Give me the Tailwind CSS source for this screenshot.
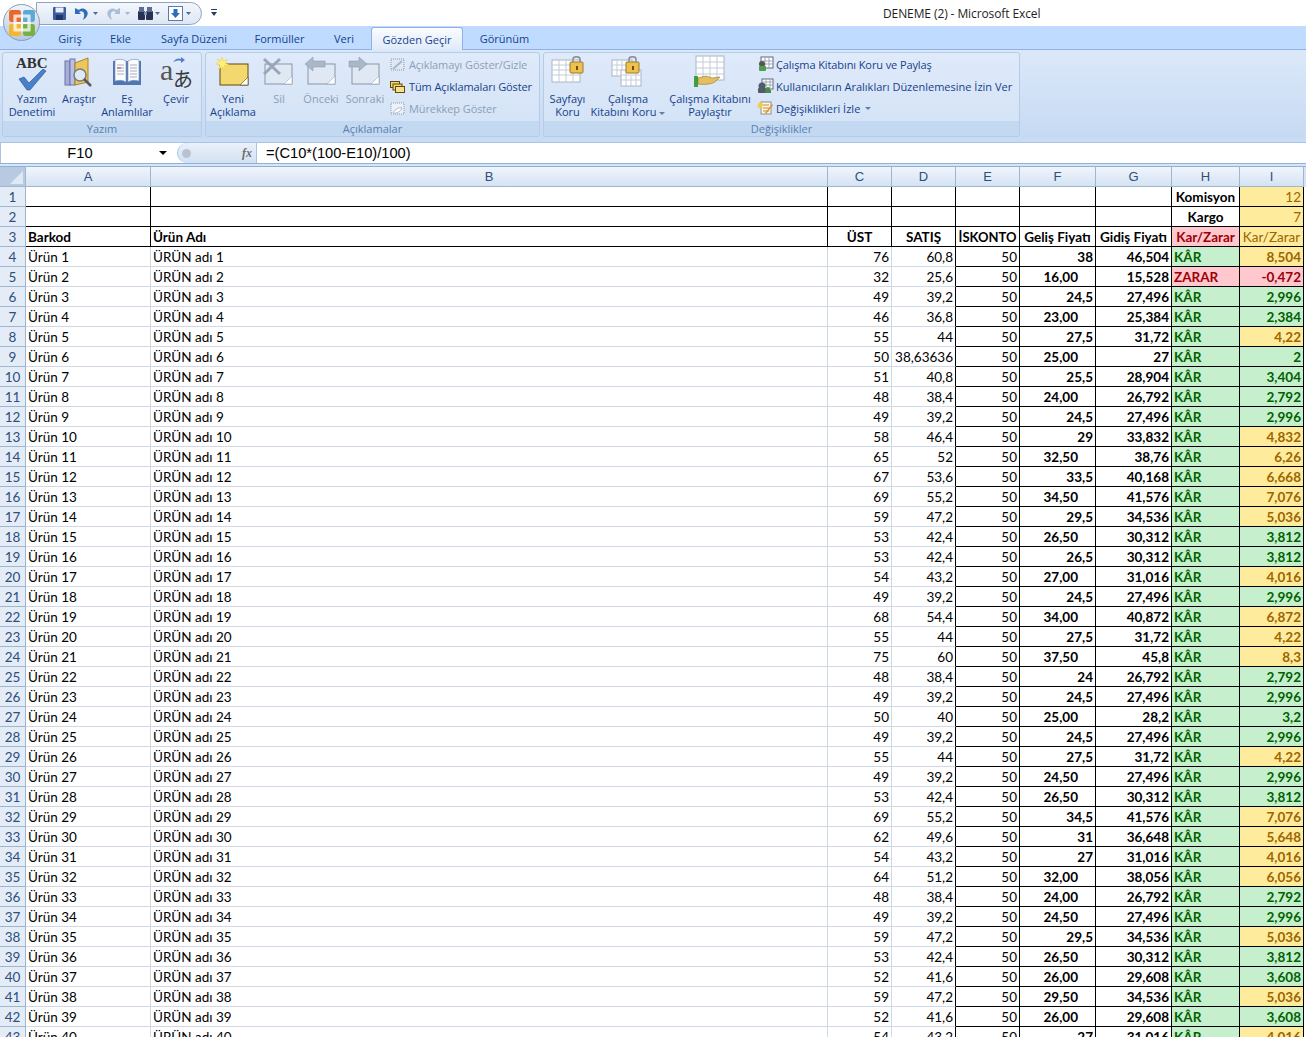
<!DOCTYPE html>
<html lang="en">
<head>
    <meta charset="UTF-8">
    <title>DENEME (2) - Microsoft Excel</title>
    <script src="https://cdn.jsdelivr.net/npm/@tailwindcss/browser@4"></script>
</head>
<body class="w-[1306px] h-[1037px] overflow-hidden bg-white font-['Open_Sans',sans-serif] text-[11px] text-[#15428b] relative">

    <!-- Office button -->
    <div class="absolute left-[3px] top-[4px] w-[37px] h-[37px] rounded-full border border-[#8a9bb5] bg-gradient-to-b from-[#f2f5fa] to-[#b9c7dc] flex items-center justify-center z-10">
        <svg width="28" height="28" viewBox="0 0 26 26">
            <rect x="1" y="1" width="11" height="11" rx="2" fill="#e8672a"/>
            <rect x="14" y="1" width="11" height="11" rx="2" fill="#5aa9d6"/>
            <rect x="1" y="14" width="11" height="11" rx="2" fill="#f3b62c"/>
            <rect x="14" y="14" width="11" height="11" rx="2" fill="#76b043"/>
            <rect x="5" y="5" width="16" height="16" rx="1" fill="#fff" fill-opacity="0.75"/>
            <rect x="8" y="8" width="4" height="4" fill="#e8672a"/>
            <rect x="14" y="8" width="4" height="4" fill="#5aa9d6"/>
            <rect x="8" y="14" width="4" height="4" fill="#f3b62c"/>
            <rect x="14" y="14" width="4" height="4" fill="#76b043"/>
        </svg>
    </div>

    <!-- Title bar -->
    <div class="h-[26px] bg-white flex items-center relative">
        <div class="ml-[36px] h-[23px] w-[166px] rounded-r-full border border-[#8ea3c0] bg-gradient-to-b from-[#f4f7fc] to-[#dce6f4] flex items-center pl-[15px]">
            <svg class="mr-[7px]" width="15" height="15" viewBox="0 0 15 15"><rect x="1" y="1" width="13" height="13" rx="1" fill="#3d5a9c"/><rect x="3.500" y="1.500" width="8" height="5" fill="#e9eef7"/><rect x="4" y="9" width="7" height="5" fill="#20356b"/></svg>
            <svg class="mr-[7px]" width="25" height="15" viewBox="0 0 25 15"><path d="M1 2v6h6L5 6c3-2 6 0 5 5l-1 3c5-3 6-8 3-10-2-2-5-2-7 0z" fill="#2f6dbb"/><path d="M19 6h5l-2.500 3z" fill="#4b6a9c"/></svg>
            <svg class="mr-[6px]" width="25" height="15" viewBox="0 0 25 15"><path d="M14 2v6H8l2-2c-3-2-6 0-5 5l1 3C1 11 0 6 3 4c2-2 5-2 7 0z" fill="#a9bdd6"/><path d="M19 6h5l-2.500 3z" fill="#a9b7cb"/></svg>
            <svg class="mr-[7px]" width="24" height="15" viewBox="0 0 24 15"><rect x="1" y="5" width="7" height="9" rx="1" fill="#26324f"/><rect x="9" y="5" width="7" height="9" rx="1" fill="#26324f"/><rect x="2" y="1" width="5" height="5" fill="#5b6d92"/><rect x="10" y="1" width="5" height="5" fill="#5b6d92"/><rect x="7" y="6" width="3" height="3" fill="#7f8db0"/><path d="M18 6h5l-2.500 3z" fill="#4b6a9c"/></svg>
            <svg width="24" height="15" viewBox="0 0 24 15"><rect x="0.500" y="0.500" width="14" height="14" fill="#fff" stroke="#5b7bae"/><path d="M5.500 3h4v4h2.500l-4.500 5-4.500-5h2.500z" fill="#2f6dbb"/><path d="M18 6h5l-2.500 3z" fill="#4b6a9c"/></svg>
        </div>
        <svg class="ml-[9px]" width="7" height="8" viewBox="0 0 7 8"><rect y="0" width="6" height="1" fill="#2c3e60"/><path d="M0 3h6l-3 4z" fill="#2c3e60"/></svg>
        <div class="absolute left-0 right-0 top-[6px] pl-[883px] text-[#1e1e1e] text-[12px] leading-[15px] tracking-[-0.1px] whitespace-nowrap">DENEME (2) - Microsoft Excel</div>
    </div>

    <!-- Tabs -->
    <div class="h-[24px] bg-[#bfdbff] border-b border-[#8db2e3] flex items-end pl-[45px]">
        <div class="w-[50px] h-[20px] flex items-center justify-center">Giriş</div>
        <div class="w-[51px] h-[20px] flex items-center justify-center">Ekle</div>
        <div class="w-[96px] h-[20px] flex items-center justify-center">Sayfa Düzeni</div>
        <div class="w-[75px] h-[20px] flex items-center justify-center">Formüller</div>
        <div class="w-[54px] h-[20px] flex items-center justify-center">Veri</div>
        <div class="w-[92px] h-[23px] pt-[2px] flex items-center justify-center bg-gradient-to-b from-[#fafcff] to-[#dfeafa] border border-[#8db2e3] border-b-0 rounded-t-[3px] -mb-px">Gözden Geçir</div>
        <div class="w-[83px] h-[20px] flex items-center justify-center">Görünüm</div>
    </div>

    <!-- Ribbon -->
    <div class="h-[88px] bg-gradient-to-b from-[#dbe8f9] to-[#c7daf3] flex pl-[2px] pt-[2px] gap-[3px]">

        <div class="w-[200px] h-[85px] rounded-[3px] border border-[#b5cce8] bg-gradient-to-b from-[#dfeafa] to-[#d2e2f6] flex flex-col overflow-hidden">
            <div class="flex-1 flex pl-[2px] text-center leading-[13px]">
                <div class="w-[54px] flex flex-col items-center pt-[2px]">
                    <div class="h-[37px] w-[36px] relative">
                        <span class="absolute left-[2px] top-0 font-['Liberation_Serif',serif] font-bold text-[15px] text-[#333] leading-[16px]">ABC</span>
                        <svg class="absolute left-[3px] top-[12px]" width="30" height="24" viewBox="0 0 30 24"><path d="M2 12l5-2 5 6L26 2l3 2L13 23h-3z" fill="#4a80c8" stroke="#2b5a9c" stroke-width="0.7"/></svg>
                    </div>
                    <div>Yazım<br>Denetimi</div>
                </div>
                <div class="w-[40px] flex flex-col items-center pt-[2px]">
                    <svg width="32" height="37" viewBox="0 0 32 37"><rect x="2" y="6" width="5" height="24" fill="#a7afd9" stroke="#6b73a8"/><rect x="7" y="4" width="5" height="26" fill="#b9c0e4" stroke="#6b73a8"/><path d="M12 8l13-5v24l-13 3z" fill="#edc65c" stroke="#a9832a"/><circle cx="17" cy="20" r="6" fill="#dfe9f2" stroke="#6f7d8a" stroke-width="1.500"/><path d="M21 24l7 7" stroke="#5a5a5a" stroke-width="2.500"/></svg>
                    <div>Araştır</div>
                </div>
                <div class="w-[56px] flex flex-col items-center pt-[2px]">
                    <svg width="32" height="37" viewBox="0 0 32 37"><rect x="2" y="6" width="28" height="24" fill="#4e76b5"/><path d="M4 5c4-1 8-1 11 1v21c-3-2-7-2-11-1zM28 5c-4-1-8-1-11 1v21c3-2 7-2 11-1z" fill="#fbfcfe" stroke="#8497b5" stroke-width="0.7"/><path d="M6 10h7M6 13h7M6 16h7M6 19h7M19 10h7M19 13h7M19 16h7M19 19h7M19 22h7" stroke="#a4afc4"/><path d="M6 13h4" stroke="#d04040"/></svg>
                    <div>Eş<br>Anlamlılar</div>
                </div>
                <div class="w-[42px] flex flex-col items-center pt-[2px]">
                    <div class="h-[37px] w-[32px] relative">
                        <span class="absolute left-0 top-[3px] font-['Liberation_Serif',serif] text-[30px] text-[#555] leading-[24px]">a</span>
                        <span class="absolute left-[13px] top-[12px] font-['Noto_Sans_CJK_JP',sans-serif] text-[20px] text-[#3a3a3a] leading-[24px]">あ</span>
                        <svg class="absolute left-[12px] top-0" width="14" height="10" viewBox="0 0 14 10"><path d="M1 7c3-4 6-4 8-3V2l4 3-4 3V6C7 5 4 6 1 7z" fill="#4a80c8"/></svg>
                    </div>
                    <div>Çevir</div>
                </div>
            </div>
            <div class="h-[15px] bg-[#c2d9f1] text-center leading-[15px] text-[#5d7fae]">Yazım</div>
        </div>

        <div class="w-[335px] h-[85px] rounded-[3px] border border-[#b5cce8] bg-gradient-to-b from-[#dfeafa] to-[#d2e2f6] flex flex-col overflow-hidden">
            <div class="flex-1 flex pl-[1px] text-center leading-[13px]">
                <div class="w-[52px] flex flex-col items-center pt-[2px]">
                    <svg width="36" height="37" viewBox="0 0 36 37"><rect x="5" y="9" width="28" height="21" fill="#f3d76f" stroke="#5e4a10"/><path d="M25 30l8-8v8z" fill="#fff" stroke="#5e4a10" stroke-width="0.6"/><path d="M7 2l1.500 4 4-1.500-2.500 3.500 4 2-4.500 .5 .5 4.500-3-3.500-3.500 3 1.500-4.500-4.500-1 4-2L2 4l4 2z" fill="#fff27a" stroke="#f2c53c" stroke-width="0.5"/></svg>
                    <div>Yeni<br>Açıklama</div>
                </div>
                <div class="w-[40px] flex flex-col items-center pt-[2px] text-[#8d9fb5]">
                    <svg width="34" height="37" viewBox="0 0 34 37"><rect x="3" y="9" width="27" height="20" fill="#e0e8f3" stroke="#8795ab"/><path d="M22 29l8-8v8z" fill="#fff" stroke="#9aa8bb" stroke-width="0.6"/><path d="M2 4l16 15M18 4L2 19" stroke="#98a6b8" stroke-width="3"/></svg>
                    <div>Sil</div>
                </div>
                <div class="w-[44px] flex flex-col items-center pt-[2px] text-[#8d9fb5]">
                    <svg width="34" height="37" viewBox="0 0 34 37"><rect x="4" y="9" width="27" height="20" fill="#e0e8f3" stroke="#8795ab"/><path d="M23 29l8-8v8z" fill="#fff" stroke="#9aa8bb" stroke-width="0.6"/><path d="M1 9l8-7v4h12v6H9v4z" fill="#a9b7c9" stroke="#8795ab" stroke-width="0.5"/></svg>
                    <div>Önceki</div>
                </div>
                <div class="w-[44px] flex flex-col items-center pt-[2px] text-[#8d9fb5]">
                    <svg width="34" height="37" viewBox="0 0 34 37"><rect x="4" y="9" width="27" height="20" fill="#e0e8f3" stroke="#8795ab"/><path d="M23 29l8-8v8z" fill="#fff" stroke="#9aa8bb" stroke-width="0.6"/><path d="M19 9l-8-7v4H1v6h10v4z" fill="#a9b7c9" stroke="#8795ab" stroke-width="0.5"/></svg>
                    <div>Sonraki</div>
                </div>
                <div class="flex-1 flex flex-col text-left pl-[3px] tracking-[-0.1px]">
                    <div class="h-[22px] flex items-center gap-[4px] text-[#8d9fb5] whitespace-nowrap"><svg width="15" height="15" viewBox="0 0 15 15"><rect x="1" y="2" width="13" height="11" fill="#e0e8f3" stroke="#8795ab" stroke-dasharray="1 1"/><path d="M3 12l9-8" stroke="#a9b7c9" stroke-width="2"/></svg>Açıklamayı Göster/Gizle</div>
                    <div class="h-[22px] flex items-center gap-[4px] whitespace-nowrap"><svg width="15" height="15" viewBox="0 0 15 15"><rect x="0.500" y="2.500" width="9" height="6" fill="#f3d76f" stroke="#5e4a10"/><rect x="3" y="5" width="9" height="6" fill="#f3d76f" stroke="#5e4a10"/><rect x="5.500" y="7.500" width="9" height="6" fill="#f7e08a" stroke="#5e4a10"/></svg>Tüm Açıklamaları Göster</div>
                    <div class="h-[22px] flex items-center gap-[4px] text-[#8d9fb5] whitespace-nowrap"><svg width="15" height="15" viewBox="0 0 15 15"><rect x="1" y="2" width="13" height="11" fill="#eef2f8" stroke="#8795ab" stroke-dasharray="1 1"/><path d="M3 12c2-4 6-6 9-5-1 3-5 6-9 5z" fill="#fff" stroke="#a9b7c9"/></svg>Mürekkep Göster</div>
                </div>
            </div>
            <div class="h-[15px] bg-[#c2d9f1] text-center leading-[15px] text-[#5d7fae]">Açıklamalar</div>
        </div>

        <div class="w-[477px] h-[85px] rounded-[3px] border border-[#b5cce8] bg-gradient-to-b from-[#dfeafa] to-[#d2e2f6] flex flex-col overflow-hidden">
            <div class="flex-1 flex pl-[1px] text-center leading-[13px]">
                <div class="w-[45px] flex flex-col items-center pt-[2px]">
                    <svg width="34" height="37" viewBox="0 0 34 37"><rect x="1" y="5" width="28" height="22" fill="#fff" stroke="#a9b4c4"/><path d="M1 10h28M1 15h28M1 20h28M8 5v22M15 5v22M22 5v22" stroke="#c3ccd9"/><rect x="19" y="7" width="13" height="11" rx="1" fill="#eec14e" stroke="#9a7a1f"/><path d="M22 7V4c0-3 7-3 7 0v3" fill="none" stroke="#8a8a8a" stroke-width="1.500"/><rect x="25" y="11" width="2" height="4" fill="#6b5012"/></svg>
                    <div>Sayfayı<br>Koru</div>
                </div>
                <div class="w-[76px] flex flex-col items-center pt-[2px]">
                    <svg width="34" height="37" viewBox="0 0 34 37"><rect x="1" y="5" width="20" height="16" fill="#fff" stroke="#a9b4c4"/><rect x="10" y="15" width="20" height="16" fill="#fff" stroke="#a9b4c4"/><path d="M1 10h20M1 15h9M6 5v16M11 5v10M10 20h20M10 25h20M15 15v16M20 21v10M25 15v16" stroke="#c3ccd9"/><rect x="15" y="7" width="13" height="11" rx="1" fill="#eec14e" stroke="#9a7a1f"/><path d="M18 7V4c0-3 7-3 7 0v3" fill="none" stroke="#8a8a8a" stroke-width="1.500"/><rect x="21" y="11" width="2" height="4" fill="#6b5012"/></svg>
                    <div class="whitespace-nowrap">Çalışma<br>Kitabını Koru <span class="inline-block w-0 h-0 align-middle border-x-[3px] border-t-[3px] border-x-transparent border-t-[#5d7fae]"></span></div>
                </div>
                <div class="w-[88px] flex flex-col items-center pt-[2px]">
                    <svg width="34" height="37" viewBox="0 0 34 37"><rect x="3" y="1" width="28" height="24" fill="#fff" stroke="#a9b4c4"/><path d="M3 7h28M3 13h28M3 19h28M10 1v24M17 1v24M24 1v24" stroke="#c3ccd9"/><rect x="1" y="21" width="4" height="11" fill="#3ca040"/><path d="M5 23l8-2 6 2 8-1-4 4c-3 3-10 4-18 3z" fill="#e5be5f" stroke="#93742a" stroke-width="0.6"/></svg>
                    <div class="whitespace-nowrap">Çalışma Kitabını<br>Paylaştır</div>
                </div>
                <div class="flex-1 flex flex-col text-left pl-[3px]">
                    <div class="h-[22px] flex items-center gap-[2px] whitespace-nowrap tracking-[-0.1px]"><svg width="17" height="16" viewBox="0 0 17 16"><rect x="4" y="1" width="12" height="11" fill="#fff" stroke="#5c6b7d"/><path d="M4 5h12M4 8h12M8 1v11M12 1v11" stroke="#9aa7b5"/><circle cx="5" cy="8" r="3" fill="#555"/><rect x="2" y="10" width="7" height="5" rx="1" fill="#4ca04c"/></svg>Çalışma Kitabını Koru ve Paylaş</div>
                    <div class="h-[22px] flex items-center gap-[2px] whitespace-nowrap"><svg width="17" height="16" viewBox="0 0 17 16"><rect x="5" y="1" width="11" height="10" fill="#fff" stroke="#5c6b7d"/><path d="M5 4h11M5 7h11M9 1v10M13 1v10" stroke="#9aa7b5"/><circle cx="5" cy="8" r="3.500" fill="#505a68"/><rect x="1" y="10" width="8" height="5" rx="1" fill="#505a68"/><circle cx="11" cy="11" r="2" fill="#3f8f4a"/><rect x="8" y="12" width="6" height="3" fill="#3f8f4a"/></svg>Kullanıcıların Aralıkları Düzenlemesine İzin Ver</div>
                    <div class="h-[22px] flex items-center gap-[2px] whitespace-nowrap"><svg width="17" height="16" viewBox="0 0 17 16"><rect x="4" y="2" width="10" height="12" fill="#fdf7df" stroke="#8f8f8f"/><path d="M6 5h6M6 8h6M6 11h6" stroke="#c08a40"/><path d="M8 13l7-9 1 1-7 9z" fill="#e68a2a"/><path d="M3 1l1 2 2-1-1 2 2 1-2 1 1 2-2-1-1 2-1-2-2 1 1-2-1-1 2-1-1-2 2 1z" fill="#f5c84a"/></svg>Değişiklikleri İzle <span class="inline-block w-0 h-0 ml-[3px] border-x-[3px] border-t-[3px] border-x-transparent border-t-[#5d7fae]"></span></div>
                </div>
            </div>
            <div class="h-[15px] bg-[#c2d9f1] text-center leading-[15px] text-[#5d7fae]">Değişiklikler</div>
        </div>
    </div>

    <!-- Formula bar -->
    <div class="h-[29px] flex flex-col">
        <div class="h-[5px] bg-[#c9dcf4] border-b border-[#a9c4e8]"></div>
        <div class="h-[20px] bg-white flex items-center font-['Liberation_Sans',sans-serif] text-[14.670px] text-black">
            <div class="w-[177px] h-full flex items-center border-l border-[#a9c4e8]">
                <span class="w-[158px] text-center">F10</span>
                <span class="w-0 h-0 border-x-[4px] border-t-[4px] border-x-transparent border-t-black"></span>
            </div>
            <div class="w-[80px] h-full flex items-center justify-between pl-[4px] pr-[4px] border-r border-l border-[#a9c4e8] bg-gradient-to-b from-[#eaf1fa] to-[#d3e1f3] rounded-l-full">
                <span class="w-[9px] h-[9px] rounded-full bg-[#b9c3d0]"></span>
                <span class="font-['Liberation_Serif',serif] italic font-bold text-[12px] text-[#6d6d6d]">fx</span>
            </div>
            <div class="pl-[9px]">=(C10*(100-E10)/100)</div>
        </div>
        <div class="flex-1 border-y border-[#8fb0d9] bg-[#d8e5f6]"></div>
    </div>

    <!-- Sheet -->
    <div id="sheet" class="grid grid-cols-[26px_125px_677px_64px_64px_64px_76px_76px_68px_64px_2px] auto-rows-[20px] font-['Lato',sans-serif] text-[13.500px] text-black"></div>

    <script>
        // [ust, satis, gelis, gidis, kar, renk]  g = yesil, y = sari, r = kirmizi
        const data = [
            ['76','60,8','38','46,504','8,504','y'],['32','25,6','16,00','15,528','-0,472','r'],
            ['49','39,2','24,5','27,496','2,996','g'],['46','36,8','23,00','25,384','2,384','g'],
            ['55','44','27,5','31,72','4,22','y'],['50','38,63636','25,00','27','2','g'],
            ['51','40,8','25,5','28,904','3,404','g'],['48','38,4','24,00','26,792','2,792','g'],
            ['49','39,2','24,5','27,496','2,996','g'],['58','46,4','29','33,832','4,832','y'],
            ['65','52','32,50','38,76','6,26','y'],['67','53,6','33,5','40,168','6,668','y'],
            ['69','55,2','34,50','41,576','7,076','y'],['59','47,2','29,5','34,536','5,036','y'],
            ['53','42,4','26,50','30,312','3,812','g'],['53','42,4','26,5','30,312','3,812','g'],
            ['54','43,2','27,00','31,016','4,016','y'],['49','39,2','24,5','27,496','2,996','g'],
            ['68','54,4','34,00','40,872','6,872','y'],['55','44','27,5','31,72','4,22','y'],
            ['75','60','37,50','45,8','8,3','y'],['48','38,4','24','26,792','2,792','g'],
            ['49','39,2','24,5','27,496','2,996','g'],['50','40','25,00','28,2','3,2','g'],
            ['49','39,2','24,5','27,496','2,996','g'],['55','44','27,5','31,72','4,22','y'],
            ['49','39,2','24,50','27,496','2,996','g'],['53','42,4','26,50','30,312','3,812','g'],
            ['69','55,2','34,5','41,576','7,076','y'],['62','49,6','31','36,648','5,648','y'],
            ['54','43,2','27','31,016','4,016','y'],['64','51,2','32,00','38,056','6,056','y'],
            ['48','38,4','24,00','26,792','2,792','g'],['49','39,2','24,50','27,496','2,996','g'],
            ['59','47,2','29,5','34,536','5,036','y'],['53','42,4','26,50','30,312','3,812','g'],
            ['52','41,6','26,00','29,608','3,608','g'],['59','47,2','29,50','34,536','5,036','y'],
            ['52','41,6','26,00','29,608','3,608','g'],['54','43,2','27','31,016','4,016','y']
        ];
        const base = 'h-5 flex items-center whitespace-nowrap overflow-hidden leading-[20px] ';
        const head = base + "justify-center pt-px bg-gradient-to-b from-[#f0f5fb] to-[#d5e3f4] border-r border-b border-[#9eb6ce] text-[#2e4f7a] font-['Liberation_Sans',sans-serif] text-[13px] ";
        const rowHead = base + 'justify-center bg-[#e4ecf7] border-r border-b border-[#9eb6ce] text-[#2e4f7a] ';
        const black = base + 'border-r border-b border-black px-[2px] ';
        const grid = base + 'border-r border-b border-[#d0d7e5] px-[2px] ';
        const gridD = base + 'border-r border-r-black border-b border-b-[#d0d7e5] px-[2px] ';
        const fills = {
            g: 'bg-[#c6efce] text-[#006100] ',
            y: 'bg-[#ffeb9c] text-[#9c6500] ',
            r: 'bg-[#ffc7ce] text-[#9c0006] '
        };
        const cell = (cls, text) => '<div class="' + cls + '">' + (text || '') + '</div>';
        const center = black + 'justify-center font-bold ';

        // sol ust kose
        let html = cell(base + 'relative bg-[#b7cae2] border-r border-b border-[#9eb6ce]', '<svg class="absolute right-[2px] bottom-[2px]" width="13" height="13" viewBox="0 0 13 13"><path d="M13 0v13H0z" fill="#dfe9f5"/></svg>');
        for (const c of ['A','B','C','D','E','F','G','H','I']) html += cell(head, c);
        html += cell('h-5 bg-[#d5e3f4]');

        // satir 1-3
        const empty = cell(black) + cell(black) + cell(black) + cell(black) + cell(black) + cell(black) + cell(black);
        html += cell(rowHead, '1') + empty + cell(center, 'Komisyon') + cell(black + fills.y + 'justify-end', '12') + cell('h-5');
        html += cell(rowHead, '2') + empty + cell(center, 'Kargo') + cell(black + fills.y + 'justify-end', '7') + cell('h-5');
        html += cell(rowHead, '3') + cell(black + 'font-bold', 'Barkod') + cell(black + 'font-bold', 'Ürün Adı') + cell(center, 'ÜST') + cell(center, 'SATIŞ') + cell(center + 'text-[13px]', 'İSKONTO') + cell(center, 'Geliş Fiyatı') + cell(center, 'Gidiş Fiyatı') + cell(center + fills.r, 'Kar/Zarar') + cell(black + fills.y + 'justify-center', 'Kar/Zarar') + cell('h-5');

        data.forEach((d, i) => {
            const n = i + 1;
            const gelisPad = /,(00|50)$/.test(d[2]) ? 'pr-[17px] ' : '';
            html += cell(rowHead, n + 3);
            html += cell(grid, 'Ürün ' + n);
            html += cell(grid, 'ÜRÜN adı ' + n);
            html += cell(grid + 'justify-end', d[0]);
            html += cell(gridD + 'justify-end', d[1]);
            html += cell(black + 'justify-end', '50');
            html += cell(black + 'justify-end font-bold ' + gelisPad, d[2]);
            html += cell(black + 'justify-end font-bold', d[3]);
            html += cell(black + 'font-bold ' + (d[5] === 'r' ? fills.r : fills.g), d[5] === 'r' ? 'ZARAR' : 'KÂR');
            html += cell(black + 'justify-end font-bold ' + fills[d[5]], d[4]);
            html += cell('h-5');
        });
        document.getElementById('sheet').innerHTML = html;
    </script>
</body>
</html>
